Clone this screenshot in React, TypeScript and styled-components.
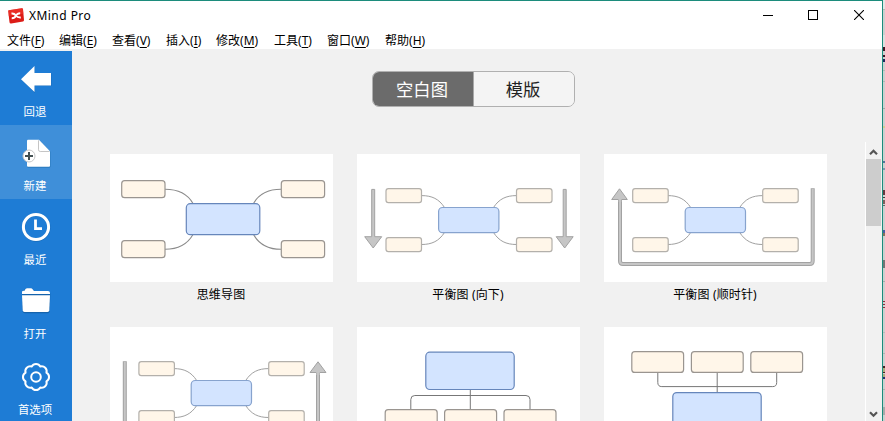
import React from "react";
import styled, { createGlobalStyle } from "styled-components";

const GlobalStyle = createGlobalStyle`
  * { box-sizing: border-box; }
  body {
    margin: 0;
    overflow: hidden;
    font-family: "Noto Sans", "Noto Sans CJK SC", sans-serif;
    font-size: 12px;
    color: #000;
  }
`;

const Screen = styled.div`
  display: flex;
  width: 885px;
  height: 421px;
  overflow: hidden;
`;

const AppWindow = styled.div`
  display: flex;
  flex-direction: column;
  width: 883px;
  height: 421px;
  flex: none;
  border-top: 1px solid #1c8c7c;
  border-right: 1px solid #1c8c7c;
  background: #f1f1f1;
`;

const DesktopEdge = styled.svg`
  display: block;
  width: 2px;
  height: 421px;
`;

const TitleBar = styled.header`
  display: flex;
  align-items: center;
  height: 30px;
  flex: none;
  padding-left: 8px;
  background: #fff;
`;

const Title = styled.span`
  flex: 1;
  margin-left: 5px;
  line-height: 16px;
  letter-spacing: 0.45px;
  white-space: nowrap;
`;

const WindowButton = styled.button`
  display: flex;
  align-items: center;
  align-self: flex-start;
  justify-content: center;
  width: 46px;
  height: 28px;
  padding: 0;
  border: 0;
  background: none;
`;

const MenuBar = styled.nav`
  display: flex;
  height: 18px;
  flex: none;
  padding-left: 7px;
  background: #fff;
`;

const MenuItem = styled.span<{ $width: number }>`
  width: ${(p) => p.$width}px;
  line-height: 20px;
  white-space: nowrap;

  u {
    text-underline-offset: 2px;
    text-decoration-skip-ink: none;
  }
`;

const Body = styled.div`
  display: flex;
  flex: 1;
  min-height: 0;
`;

const Sidebar = styled.aside`
  width: 72px;
  flex: none;
  margin-top: 2px;
  background: #1e7cd5;
`;

const SideItem = styled.div<{ $active?: boolean }>`
  display: flex;
  flex-direction: column;
  align-items: center;
  height: 74px;
  padding: 12px 2px 0 0;
  background: ${(p) => (p.$active ? "#3f8fd9" : "transparent")};
  color: #fff;
  font-size: 11.4px;

  &:last-child {
    padding-top: 14px;
  }

  svg {
    flex: none;
    margin-left: 2px;
  }
`;

const SideLabel = styled.span`
  margin-top: 8px;
  line-height: 17px;
  white-space: nowrap;
`;

const Main = styled.main`
  display: flex;
  flex-direction: column;
  flex: 1;
  min-width: 0;
`;

const TabRow = styled.div`
  display: flex;
  height: 93px;
  flex: none;
  padding: 22px 0 0 300px;
`;

const Tabs = styled.div`
  display: flex;
  width: 203px;
  height: 36px;
  border: 1px solid #b0b0b0;
  border-radius: 7px;
  overflow: hidden;
`;

const Tab = styled.button<{ $active?: boolean }>`
  width: ${(p) => (p.$active ? 101 : 100)}px;
  padding: 0 2px 0 0;
  border: 0;
  border-right: ${(p) => (p.$active ? "1px solid #a8a8a8" : "0")};
  background: ${(p) => (p.$active ? "#6b6b6b" : "#f4f4f4")};
  color: ${(p) => (p.$active ? "#fff" : "#222")};
  font: 17.3px/34px "Noto Sans CJK SC", sans-serif;
`;

const Viewport = styled.div`
  display: flex;
  flex: 1;
  min-height: 0;
`;

const Gallery = styled.div`
  display: grid;
  flex: 1;
  grid-template-columns: repeat(3, 223px);
  grid-auto-rows: 149px;
  align-content: start;
  gap: 24px;
  padding: 12px 0 0 38px;
  overflow: hidden;
`;

const Template = styled.figure`
  display: flex;
  flex-direction: column;
  align-items: center;
  margin: 0;
`;

const Preview = styled.svg`
  display: block;
  width: 223px;
  height: 128px;
  flex: none;
  background: #fff;
`;

const Caption = styled.figcaption`
  margin-top: 4px;
  padding-right: 1px;
  line-height: 18px;
  letter-spacing: 0.15px;
  white-space: nowrap;
`;

const Scrollbar = styled.div`
  display: flex;
  flex-direction: column;
  align-items: center;
  justify-content: space-between;
  width: 17px;
  padding-right: 1px;
  border-left: 1px solid #fff;
`;

const ScrollHead = styled.div`
  display: flex;
  flex-direction: column;
  align-items: center;
`;

const ScrollArrow = styled.div`
  display: flex;
  align-items: center;
  justify-content: center;
  width: 15px;
  height: 17px;
  padding-top: 3px;
`;

const Thumb = styled.div`
  width: 15px;
  height: 67px;
  background: #cdcdcd;
`;

type BoxProps = { x: number; y: number; w: number; h: number; color?: "main" | "leaf"; soft?: boolean };

const Box = ({ x, y, w, h, color = "leaf", soft }: BoxProps) => (
  <rect
    x={x}
    y={y}
    width={w}
    height={h}
    rx={color === "main" ? 4 : soft ? 2.4 : 3}
    fill={color === "main" ? "#d3e4ff" : "#fff6e9"}
    stroke={color === "main" ? (soft ? "#87a3ce" : "#6686bb") : soft ? "#b3b0ab" : "#9a9590"}
    strokeWidth="1.2"
  />
);

const MindMap = () => (
  <>
    <g fill="none" stroke="#8b8b8b" strokeWidth="1.1">
      <path d="M55 35.3C67 35.3 77 39 83 49.5M171 35.3C159 35.3 149.5 39 143.5 49.5" />
      <path d="M55 95.3C67 95.3 77 91 83 80.5M171 95.3C159 95.3 149.5 91 143.5 80.5" />
    </g>
    {[11.7, 171.3].map((x) => [26.7, 86.7].map((y) => <Box key={`${x}-${y}`} x={x} y={y} w={43.3} h={17} />))}
    <Box x={76.3} y={49.7} w={73.5} h={31} color="main" />
  </>
);

const Balanced = ({ dx = 0, left = 29 }: { dx?: number; left?: number }) => (
  <>
    <g fill="none" stroke="#a0a0a0" strokeWidth="1" transform={`translate(${dx} 0)`}>
      <path d="M64.5 41.6C75 41.6 82 45 87.5 53.5M159.5 41.6C149 41.6 142 45 136.5 53.5" />
      <path d="M64.5 90.5C75 90.5 82 87 87.5 78.5M159.5 90.5C149 90.5 142 87 136.5 78.5" />
    </g>
    {[left, 159.5 + dx].map((x) => [34.6, 83.6].map((y) => <Box key={`${x}-${y}`} x={x} y={y} w={35.5} h={14} soft />))}
    <Box x={81.6 + dx / 2} y={53.5} w={60.3} h={25.2} color="main" soft />
  </>
);

const arrowPaint = { fill: "#c6c6c6", stroke: "#a2a2a2", strokeWidth: 1 };

const DownArrow = ({ x }: { x: number }) => (
  <path {...arrowPaint} d={`M${x - 1.5} 35.4h3v47.3h7l-8.5 11.3l-8.5-11.3h7Z`} />
);

const Downward = () => (
  <>
    <Balanced />
    <DownArrow x={16.2} />
    <DownArrow x={207.7} />
  </>
);

const Clockwise = () => (
  <>
    <Balanced dx={-0.8} left={28.7} />
    <path d="M208.7 34.3V107Q208.7 110 205.7 110H19Q16 110 16 107V45" fill="none" stroke="#a2a2a2" strokeWidth="4" />
    <path d="M208.7 35V107Q208.7 110 205.7 110H19Q16 110 16 107V45" fill="none" stroke="#c6c6c6" strokeWidth="2" />
    <path {...arrowPaint} d="M15.5 34.8L23.4 45.5H17.3V48H14.7V45.5H7.6Z" stroke="none" />
    <path fill="none" stroke="#a2a2a2" d="M14.2 45.5H7.7L15.5 34.8L23.3 45.5H17.8" />
  </>
);

const CounterClockwise = () => (
  <>
    <Balanced dx={-0.8} left={28.9} />
    <path d="M14.8 34.3V107Q14.8 110 17.8 110H205Q208 110 208 107V45" fill="none" stroke="#a2a2a2" strokeWidth="4" />
    <path d="M14.8 35V107Q14.8 110 17.8 110H205Q208 110 208 107V45" fill="none" stroke="#c6c6c6" strokeWidth="2" />
    <path {...arrowPaint} d="M208 34.8L216 45.5H209.5V48H206.5V45.5H200Z" stroke="none" />
    <path fill="none" stroke="#a2a2a2" d="M206 45.5H200L208 34.8L216 45.5H210" />
  </>
);

const OrgDown = () => (
  <>
    <path d="M113.3 62V83M53.8 83V72.5Q53.8 68.5 57.8 68.5H169Q173 68.5 173 72.5V83" fill="none" stroke="#777" strokeWidth="1" />
    <Box x={68.8} y={25.2} w={88.4} h={37.3} color="main" />
    {[28.2, 87.6, 147].map((x) => <Box key={x} x={x} y={82.7} w={52} h={21} />)}
  </>
);

const OrgUp = () => (
  <>
    <path d="M113.2 45V66M53.8 45V55.5Q53.8 59.6 57.8 59.6H168.7Q172.7 59.6 172.7 55.5V45" fill="none" stroke="#777" strokeWidth="1" />
    <Box x={68.8} y={65.6} w={88.4} h={37} color="main" />
    {[27.8, 87.4, 146.8].map((x) => <Box key={x} x={x} y={24.7} w={51.8} h={20.7} />)}
  </>
);

const templates: { id: string; name?: string; Drawing: React.FC }[] = [
  { id: "map", name: "思维导图", Drawing: MindMap },
  { id: "down", name: "平衡图 (向下)", Drawing: Downward },
  { id: "clockwise", name: "平衡图 (顺时针)", Drawing: Clockwise },
  { id: "counter", Drawing: CounterClockwise },
  { id: "org-down", Drawing: OrgDown },
  { id: "org-up", Drawing: OrgUp },
];

const menus: [string, string, number][] = [
  ["文件", "F", 52],
  ["编辑", "E", 53],
  ["查看", "V", 54],
  ["插入", "I", 50],
  ["修改", "M", 58],
  ["工具", "T", 53],
  ["窗口", "W", 58],
  ["帮助", "H", 50],
];

const BackIcon = () => (
  <svg width="36" height="32" viewBox="0 0 36 32">
    <path d="M17 3.5V10.5H33.5V23H17V30L3.5 16.8Z" fill="#135b9f" opacity=".45" />
    <path d="M16.5 3V10H33V22.5H16.5V29L3 16.2Z" fill="#fff" />
  </svg>
);

const NewIcon = () => (
  <svg width="36" height="32" viewBox="0 0 36 32">
    <g transform="translate(0 .8)">
      <path d="M10 2.5H21.5L32.5 14V28.5Q32.5 30 31 30H10.5Q9 30 9 28.5V3.5Q9 2.5 10 2.5Z" fill="#216ead" opacity=".65" />
      <path d="M10 2H21L32 13.500V28Q32 29 31 29H10Q9 29 9 28V3Q9 2 10 2Z" fill="#fff" />
      <path d="M20.500 2.5V12Q20.5 13.700 22.200 13.700H31.5" fill="none" stroke="#c5c5c5" />
      <circle cx="11" cy="18.200" r="6" fill="#fff" stroke="#c8c8c8" strokeWidth="1" />
      <path d="M11 14.200V22.200M7 18.200H15" stroke="#435052" strokeWidth="2" />
    </g>
  </svg>
);

const RecentIcon = () => (
  <svg width="36" height="32" viewBox="0 0 36 32">
    <circle cx="18.3" cy="16.5" r="12.7" fill="none" stroke="#145b9d" strokeWidth="3" opacity=".5" />
    <circle cx="18" cy="16" r="12.6" fill="none" stroke="#fff" strokeWidth="3" />
    <path d="M17.5 8.5V17.7H24" fill="none" stroke="#fff" strokeWidth="2.8" />
  </svg>
);

const FolderIcon = () => (
  <svg width="36" height="32" viewBox="0 0 36 32">
    <path d="M4 10V7Q4 5.500 6 5.200L8 3.500H14L17 6.500H30.500Q32.300 6.500 32.300 9L31.700 26Q31.500 28.300 29.500 28.300H7Q4.700 28.300 4.500 26Z" fill="#135b9e" opacity=".75" />
    <path d="M4 9V7Q4 5.700 5.500 5.700H6.500L7.500 4Q8 3.200 9.200 3.200H13Q14 3.200 14.600 4.200L16 6H30Q32 6 32 8V9Z" fill="#fff" />
    <path d="M4 10.200H32L31.300 25.200Q31.200 27 29.500 27H6.500Q4.800 27 4.700 25.200Z" fill="#fff" />
  </svg>
);

// Outline of a gear with eight rounded lobes centred on (18, 16).
const gearOutline = Array.from({ length: 9 }, (_, i) => {
  const angle = ((i * 45 + 22.5) * Math.PI) / 180;
  const point = `${(18 + 11.3 * Math.cos(angle)).toFixed(2)} ${(16 + 11.3 * Math.sin(angle)).toFixed(2)}`;
  return i === 0 ? `M${point}` : `A4.9 4.9 0 0 1 ${point}`;
}).join("") + "Z";

const GearIcon = () => (
  <svg width="36" height="32" viewBox="0 0 36 32" fill="none" stroke="#fff" strokeWidth="2">
    <path d={gearOutline} strokeLinejoin="round" />
    <circle cx="18" cy="16" r="4.800" />
  </svg>
);

const sideItems = [
  { label: "回退", Icon: BackIcon },
  { label: "新建", Icon: NewIcon, active: true },
  { label: "最近", Icon: RecentIcon },
  { label: "打开", Icon: FolderIcon },
  { label: "首选项", Icon: GearIcon },
];

const Logo = () => (
  <svg width="16" height="16" viewBox="0 0 16 16">
    <path d="M.8 2.2L13.7.2Q14.8 0 15 1L16 12Q16 13.1 15 13.4L3.2 15.5Q1.7 15.7 1.5 14.2L.2 3.2Q0 2.4.8 2.2Z" fill="#dc1c17" />
    <path d="M.7 2.3L13.7.3Q14.8.2 14.9 1L15.3 5.7L.7 8Z" fill="#ef382d" opacity=".65" />
    <path d="M3.5 5.5Q6.3 5.2 7.800 7.500Q9.500 9.700 12.800 9.500M3.700 10.300Q6.700 10.400 8 7.600Q9.300 5.200 12.200 5.200" fill="none" stroke="#fff" strokeWidth="1.900" />
  </svg>
);

const Chevron = ({ down }: { down?: boolean }) => (
  <svg width="9" height="7" viewBox="0 0 9 7">
    <path d={down ? "M1 1.2L4.5 4.7L8 1.2" : "M1 5.3L4.5 1.8L8 5.3"} fill="none" stroke="#555" strokeWidth="2.2" />
  </svg>
);

const edgeMarks: [number, number, string][] = [
  [0, 9, "#e5e5e5"], [9, 1, "#b7b7b7"], [35, 12, "#dedede"], [47, 4, "#451425"],
  [55, 2, "#421326"], [59, 3, "#25245c"], [70, 1, "#b6b6b6"], [81, 1, "#b5b5b5"],
  [108, 1, "#a7a7a7"], [126, 2, "#d5cc93"], [161, 2, "#56739a"], [168, 2, "#8297b2"],
  [190, 5, "#653940"], [197, 1, "#4b3c3b"], [200, 4, "#805e5c"], [205, 1, "#666"],
  [230, 3, "#4b5ba2"], [233, 3, "#8a725b"], [260, 8, "#757575"], [281, 1, "#aaa"],
  [301, 1, "#922d3c"], [304, 1, "#922d3c"], [307, 1, "#922d3c"], [332, 1, "#bbb"],
  [353, 1, "#b4b4b4"], [366, 2, "#4c2025"], [368, 4, "#b1ac80"], [372, 1, "#4c2025"],
  [374, 3, "#b1ac80"], [377, 2, "#293073"], [389, 1, "#b1b1b1"], [407, 8, "#aaa"],
];

export default function App() {
  return (
    <>
      <GlobalStyle />
      <Screen>
        <AppWindow>
          <TitleBar>
            <Logo />
            <Title>XMind Pro</Title>
            <WindowButton aria-label="Minimize">
              <svg width="12" height="10"><path d="M2 5.5H12" stroke="#000" /></svg>
            </WindowButton>
            <WindowButton aria-label="Maximize">
              <svg width="10" height="10"><rect x=".5" y=".5" width="9" height="9" fill="none" stroke="#000" /></svg>
            </WindowButton>
            <WindowButton aria-label="Close">
              <svg width="10" height="10"><path d="M0 0L10 10M10 0L0 10" stroke="#000" strokeWidth="1.1" /></svg>
            </WindowButton>
          </TitleBar>
          <MenuBar>
            {menus.map(([label, key, width]) => (
              <MenuItem key={key} $width={width}>{label}(<u>{key}</u>)</MenuItem>
            ))}
          </MenuBar>
          <Body>
            <Sidebar>
              {sideItems.map(({ label, Icon, active }) => (
                <SideItem key={label} $active={active}>
                  <Icon />
                  <SideLabel>{label}</SideLabel>
                </SideItem>
              ))}
            </Sidebar>
            <Main>
              <TabRow>
                <Tabs>
                  <Tab $active>空白图</Tab>
                  <Tab>模版</Tab>
                </Tabs>
              </TabRow>
              <Viewport>
                <Gallery>
                  {templates.map(({ id, name, Drawing }) => (
                    <Template key={id}>
                      <Preview viewBox="0 0 223 128"><Drawing /></Preview>
                      {name && <Caption>{name}</Caption>}
                    </Template>
                  ))}
                </Gallery>
                <Scrollbar>
                  <ScrollHead>
                    <ScrollArrow><Chevron /></ScrollArrow>
                    <Thumb />
                  </ScrollHead>
                  <ScrollArrow><Chevron down /></ScrollArrow>
                </Scrollbar>
              </Viewport>
            </Main>
          </Body>
        </AppWindow>
        <DesktopEdge viewBox="0 0 2 421">
          <rect width="2" height="421" fill="#cfcfcf" />
          {edgeMarks.map(([y, height, fill]) => <rect key={y} y={y} width="2" height={height} fill={fill} />)}
        </DesktopEdge>
      </Screen>
    </>
  );
}
